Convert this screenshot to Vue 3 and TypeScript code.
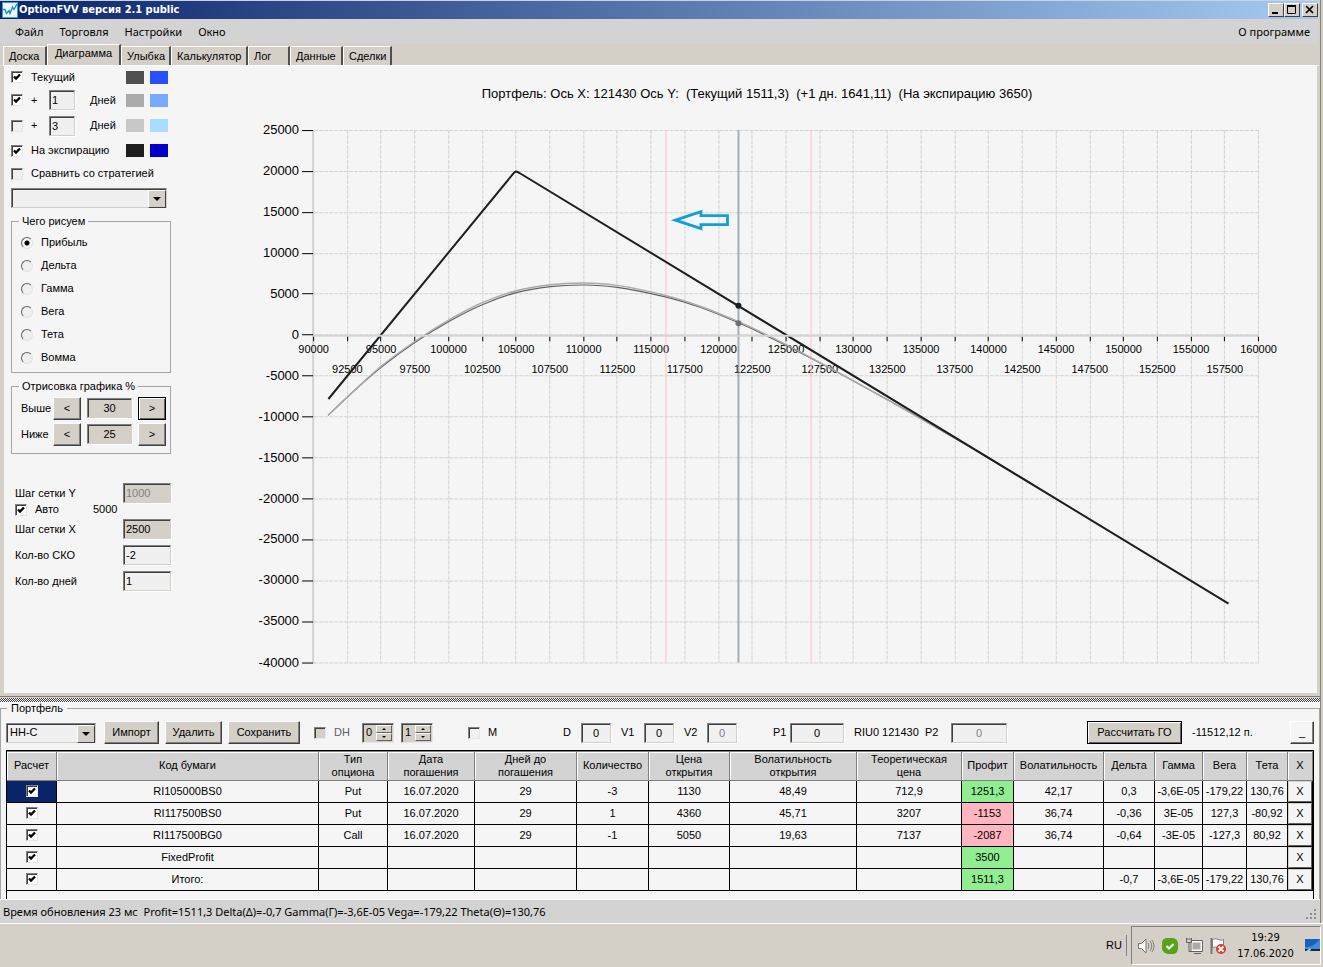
<script setup lang="ts">
import { ref } from 'vue'

type Pt = [number, number]

const menu = ['Файл', 'Торговля', 'Настройки', 'Окно']
const tabs = [
  { t: 'Доска', w: 44 }, { t: 'Диаграмма', w: 74 }, { t: 'Улыбка', w: 50 }, { t: 'Калькулятор', w: 77 },
  { t: 'Лог', w: 42 }, { t: 'Данные', w: 53 }, { t: 'Сделки', w: 49 },
]
const series = [
  { id: 'now', on: true, label: 'Текущий', a: '#505050', b: '#2850ff', h: 22 },
  { id: 'd1', on: true, label: '+', days: '1', a: '#aaaaaa', b: '#78aaff', h: 24 },
  { id: 'd3', on: false, label: '+', days: '3', a: '#c8c8c8', b: '#aadcff', h: 27 },
  { id: 'exp', on: true, label: 'На экспирацию', a: '#1e1e1e', b: '#0000c8', h: 23 },
]
const greeks = ['Прибыль', 'Дельта', 'Гамма', 'Вега', 'Тета', 'Вомма']
const greek = ref('Прибыль')

// chart scales
const X = (v: number) => 313.5 + (v - 90000) * 0.013487
const Y = (v: number) => 334.9 - v * 0.008182
const yTicks = Array.from({ length: 14 }, (_, i) => 25000 - i * 5000)
const xTicks = Array.from({ length: 29 }, (_, i) => 90000 + i * 2500)
const snap = (v: number) => Math.floor(v) + 0.5

const expiry = [[91100, -7800], [104850, 19850], [105000, 20000], [105250, 19800], [157780, -32780]] as Pt[]
const expiryPts = expiry.map(([x, y]) => `${X(x).toFixed(1)},${Y(y).toFixed(1)}`).join(' ')

const nowPts: Pt[] = [[328, 415], [354, 390.5], [381, 367], [415, 342], [450, 320.5], [482, 304.5], [516, 292.5], [550, 286.5], [583, 284.8], [617, 287.2], [666, 297], [701, 307.5], [738, 322.5], [769, 337], [820, 363], [887, 399.5], [930, 424], [970, 447], [1030, 483]]
const lift = [0, 0, -1, -1, -1.5, -2, -2, -2, -2, -2, -1.5, -1, -1, -1, -0.5, 0, 0, 0, 0]
const plusPts: Pt[] = nowPts.map(([x, y], i) => [x, y + lift[i]])

function smooth(p: Pt[]): string {
  let d = `M${p[0][0]} ${p[0][1]}`
  for (let i = 0; i < p.length - 1; i++) {
    const a = p[Math.max(0, i - 1)], b = p[i], c = p[i + 1], e = p[Math.min(p.length - 1, i + 2)]
    d += ` C${b[0] + (c[0] - a[0]) / 6} ${b[1] + (c[1] - a[1]) / 6} ${c[0] - (e[0] - b[0]) / 6} ${c[1] - (e[1] - b[1]) / 6} ${c[0]} ${c[1]}`
  }
  return d
}

const heads = ['Расчет', 'Код бумаги', 'Тип\nопциона', 'Дата\nпогашения', 'Дней до\nпогашения', 'Количество', 'Цена\nоткрытия', 'Волатильность\nоткрытия', 'Теоретическая\nцена', 'Профит', 'Волатильность', 'Дельта', 'Гамма', 'Вега', 'Тета', 'X']
const rows = [
  ['RI105000BS0', 'Put', '16.07.2020', '29', '-3', '1130', '48,49', '712,9', '1251,3', '42,17', '0,3', '-3,6E-05', '-179,22', '130,76'],
  ['RI117500BS0', 'Put', '16.07.2020', '29', '1', '4360', '45,71', '3207', '-1153', '36,74', '-0,36', '3E-05', '127,3', '-80,92'],
  ['RI117500BG0', 'Call', '16.07.2020', '29', '-1', '5050', '19,63', '7137', '-2087', '36,74', '-0,64', '-3E-05', '-127,3', '80,92'],
  ['FixedProfit', '', '', '', '', '', '', '', '3500', '', '', '', '', ''],
  ['Итого:', '', '', '', '', '', '', '', '1511,3', '', '-0,7', '-3,6E-05', '-179,22', '130,76'],
]
const profitClass = (c: string, i: number) => (i !== 8 ? '' : c.startsWith('-') ? 'loss' : 'gain')
</script>

<template>
  <div class="desktop">
    <div class="window">
      <header class="title">
        <svg class="logo" viewBox="0 0 16 16" aria-hidden="true">
          <rect width="16" height="16" fill="#2d9fd0" />
          <rect x="1" y="1" width="14" height="14" fill="#eefaff" />
          <path d="M1 7.500h2l1.500 4L7 8.500l1 3L10.500 5l1.500 2.500L15 2" fill="none" stroke="#1689bd" stroke-width="1.300" />
        </svg>
        <h1>OptionFVV версия 2.1 public</h1>
        <div class="winbtns">
          <button aria-label="Свернуть"><svg viewBox="0 0 12 10"><path d="M2 8h6" stroke="#000" stroke-width="2" /></svg></button>
          <button aria-label="Развернуть"><svg viewBox="0 0 12 10"><path d="M1.500 1v7.500h8V1" fill="none" stroke="#000" /><path d="M1 1h9" stroke="#000" stroke-width="2" /></svg></button>
          <button class="close" aria-label="Закрыть"><svg viewBox="0 0 12 10"><path d="M2 1l7 7M9 1L2 8" stroke="#000" stroke-width="1.700" /></svg></button>
        </div>
      </header>

      <nav class="menu">
        <button v-for="m in menu" :key="m">{{ m }}</button>
        <button class="about">О программе</button>
      </nav>

      <div class="tabs" role="tablist">
        <button v-for="(t, i) in tabs" :key="t.t" role="tab" :class="{ on: i === 1 }" :aria-selected="i === 1" :style="{ width: t.w + 'px' }">{{ t.t }}</button>
      </div>

      <main class="page">
        <aside class="side">
          <div v-for="s in series" :key="s.id" class="srow" :style="{ height: s.h + 'px' }">
            <input :id="s.id" type="checkbox" class="chk" :checked="s.on" />
            <label :for="s.id" :class="s.days ? 'plus' : 'wide'">{{ s.label }}</label>
            <template v-if="s.days">
              <input :id="s.id + 'n'" class="box days" :value="s.days" />
              <label :for="s.id + 'n'" class="dn">Дней</label>
            </template>
            <i class="sw" :style="{ background: s.a }"></i><i class="sw" :style="{ background: s.b }"></i>
          </div>
          <div class="srow cmp">
            <input id="cmp" type="checkbox" class="chk" /><label for="cmp">Сравнить со стратегией</label>
          </div>
          <div class="combo strat"><select aria-label="Стратегия"><option></option></select></div>

          <fieldset class="group">
            <legend>Чего рисуем</legend>
            <label v-for="g in greeks" :key="g" class="radio"><input v-model="greek" type="radio" name="greek" :value="g" />{{ g }}</label>
          </fieldset>

          <fieldset class="group range">
            <legend>Отрисовка графика %</legend>
            <div class="rrow"><label for="up">Выше</label><button class="btn">&lt;</button><input id="up" class="box" value="30" /><button class="btn default">&gt;</button></div>
            <div class="rrow"><label for="dn">Ниже</label><button class="btn">&lt;</button><input id="dn" class="box" value="25" /><button class="btn">&gt;</button></div>
          </fieldset>

          <div class="params">
            <div class="prow first"><label for="gy">Шаг сетки Y</label><input id="gy" class="box gray" value="1000" disabled /></div>
            <div class="prow auto"><input id="auto" type="checkbox" class="chk" checked /><label for="auto">Авто</label><span>5000</span></div>
            <div class="prow"><label for="gx">Шаг сетки X</label><input id="gx" class="box gray" value="2500" /></div>
            <div class="prow"><label for="sko">Кол-во СКО</label><input id="sko" class="box" value="-2" /></div>
            <div class="prow"><label for="days">Кол-во дней</label><input id="days" class="box" value="1" /></div>
          </div>
        </aside>

        <svg class="chart" viewBox="204 66 1112 626" role="img" aria-label="Портфель">
          <text class="ctitle" x="756.500" y="98" text-anchor="middle" xml:space="preserve">Портфель: Ось X: 121430 Ось Y:&nbsp; (Текущий 1511,3)&nbsp; (+1 дн. 1641,11)&nbsp; (На экспирацию 3650)</text>
          <g stroke="#d3d3d3" stroke-dasharray="4 1">
            <line v-for="v in yTicks" :key="'h' + v" x1="314" x2="1258" :y1="snap(Y(v))" :y2="snap(Y(v))" />
            <line v-for="v in xTicks" :key="'v' + v" y1="130" y2="662" :x1="snap(X(v))" :x2="snap(X(v))" />
          </g>
          <path d="M313 130V663" stroke="#d3d3d3" stroke-width="2" />
          <g stroke="#000">
            <line v-for="v in yTicks" :key="'t' + v" x1="302" x2="313" :y1="snap(Y(v))" :y2="snap(Y(v))" />
            <line v-for="v in xTicks" :key="'u' + v" y1="336" y2="341" :x1="snap(X(v))" :x2="snap(X(v))" />
          </g>
          <g class="ylab"><text v-for="v in yTicks" :key="v" x="299" :y="Math.round(Y(v)) + 4" text-anchor="end">{{ v }}</text></g>
          <g class="xlab"><text v-for="(v, i) in xTicks" :key="v" :x="X(v)" :y="i % 2 ? 373 : 353" text-anchor="middle">{{ v }}</text></g>
          <path d="M665.500 130V662M810.500 130V662" stroke="#ffc0cb" />
          <path d="M738 130V662" stroke="#708090" stroke-opacity=".6" stroke-width="2" />
          <path :d="smooth(nowPts)" fill="none" stroke="#606060" stroke-width="1.200" />
          <path :d="smooth(plusPts)" fill="none" stroke="#aaaaaa" stroke-width="1.400" />
          <polyline :points="expiryPts" fill="none" stroke="#1e1e1e" stroke-width="2" stroke-linejoin="round" />
          <path d="M313 335.500H1258" stroke="#d3d3d3" stroke-width="2" fill="none" />
          <circle cx="738" cy="305.500" r="3" fill="#1e1e1e" />
          <circle cx="738" cy="323" r="3" fill="#707070" />
          <path d="M675 220L700.500 211.500V215.500H727V224.500H700.500V228.500Z" fill="none" stroke="#119fda" stroke-width="2.800" />
        </svg>
      </main>

      <div class="splitter"></div>

      <section class="lower">
        <fieldset class="portfolio">
          <legend>Портфель</legend>
          <div class="tools">
            <div class="combo white"><select aria-label="Портфель"><option>HH-C</option></select></div>
            <button class="btn w55">Импорт</button>
            <button class="btn w57">Удалить</button>
            <button class="btn w72">Сохранить</button>
            <span class="pair off"><input id="dh" type="checkbox" class="chk" disabled /><label for="dh">DH</label></span>
            <span class="spin"><input value="0" aria-label="DH от" /><span><button aria-label="Больше"><i class="up"></i></button><button aria-label="Меньше"><i class="down"></i></button></span></span>
            <span class="spin"><input value="1" aria-label="DH шаг" /><span><button aria-label="Больше"><i class="up"></i></button><button aria-label="Меньше"><i class="down"></i></button></span></span>
            <span class="pair"><input id="m" type="checkbox" class="chk" /><label for="m">M</label></span>
            <label for="d">D</label><input id="d" class="box w30" value="0" />
            <label for="v1">V1</label><input id="v1" class="box w30" value="0" />
            <label for="v2">V2</label><input id="v2" class="box w30" value="0" disabled />
            <label for="p1">P1</label><input id="p1" class="box w54" value="0" />
            <span>RIU0 121430</span>
            <label for="p2">P2</label><input id="p2" class="box w56" value="0" disabled />
            <button class="btn default w95">Рассчитать ГО</button>
            <span>-11512,12 п.</span>
            <button class="btn mini">_</button>
          </div>

          <div class="gridwrap">
            <table>
              <colgroup><col v-for="i in 16" :key="i" :class="'c' + i" /></colgroup>
              <thead><tr><th v-for="h in heads" :key="h">{{ h }}</th></tr></thead>
              <tbody>
                <tr v-for="(r, n) in rows" :key="n">
                  <td :class="{ sel: n === 0 }"><input type="checkbox" class="chk" checked :aria-label="r[0]" /></td>
                  <td v-for="(c, i) in r" :key="i" :class="profitClass(c, i)">{{ c }}</td>
                  <td class="xcell"><button class="btn">X</button></td>
                </tr>
              </tbody>
            </table>
          </div>
        </fieldset>
      </section>

      <footer class="status">
        <span>Время обновления 23 мс&nbsp; Profit=1511,3 Delta(Δ)=-0,7 Gamma(Γ)=-3,6E-05 Vega=-179,22 Theta(Θ)=130,76</span>
        <svg viewBox="0 0 12 12" class="grip" aria-hidden="true"><path d="M9 1h2v2H9zM5 5h2v2H5zM9 5h2v2H9zM1 9h2v2H1zM5 9h2v2H5zM9 9h2v2H9z" fill="#8f8d88" /></svg>
      </footer>
    </div>

    <div class="taskbar">
      <span class="lang">RU</span>
      <div class="tray">
        <svg viewBox="0 0 18 18"><path d="M1.500 6.500h3L9 2v14l-4.500-4.500h-3z" fill="#fff" stroke="#77746f" /><path d="M11 6q2 3 0 6M13 4q3.500 5 0 10M15 3q4 6 0 12" fill="none" stroke="#85827c" /></svg>
        <svg viewBox="0 0 18 18"><path d="M5 1h7q5 1 5 6v5q-1 5-5 5H7q-5-1-6-5V6q0-4 4-5z" fill="#55a316" /><path d="M5.500 9l2.500 2.500L12.500 7" fill="none" stroke="#fff" stroke-width="2" /></svg>
        <svg viewBox="0 0 18 18"><path d="M6.500 4.500h10v9h-10z" fill="#aaa9a5" stroke="#fff" stroke-width="2" /><path d="M6 3.500h11.500v11H6zM9 16.500h7M1.500 1v4.500h5V1M4 5.500v9h3M3 1v2M5 1v2" fill="none" stroke="#66635e" /></svg>
        <svg viewBox="0 0 18 18"><path d="M2.500 1v16" stroke="#77746f" stroke-width="2" /><path d="M3.500 2.500q3-1.500 6 0t5 0v8q-3 1-5.500 0t-5.500 0z" fill="#fff" stroke="#85827c" /><circle cx="12" cy="12" r="5" fill="#d83b35" /><path d="M9.500 9.500l5 5M14.500 9.500l-5 5" stroke="#fff" stroke-width="1.800" /></svg>
        <div class="clock"><div>19:29</div><div>17.06.2020</div></div>
        <svg class="desk" viewBox="0 0 16 18"><path d="M1 2h15v12H1z" fill="#1c5fb8" /><path d="M1 10q8 1 15-8v12H1z" fill="#3c8de0" /><path d="M1 12h15v2H1z" fill="#20262e" /><path d="M2 14l4-3 1 2-3 2z" fill="#9fd2f2" /></svg>
      </div>
    </div>
  </div>
</template>

<style>
body { background: #d4d0c8; }
</style>

<style scoped>
.desktop { min-height: 100vh; display: flex; flex-direction: column; background: #d4d0c8; font: 11px/13px "Liberation Sans", Arial, sans-serif; color: #000; }
.desktop * { box-sizing: border-box; }
button, input, select { font: inherit; color: inherit; margin: 0; border-radius: 0; }
.window { margin-right: 2px; border-right: 1px solid #808080; }
.title { display: flex; align-items: center; height: 19px; margin-right: 2px; padding-left: 2px; border-top: 1px solid #c5d4e4; background: linear-gradient(90deg, #0a246a, #a6caf0); }
.logo { width: 16px; height: 16px; }
h1 { flex: 1; margin: 0 0 0 1px; font: bold 11px/14px "DejaVu Sans Condensed", Tahoma, sans-serif; color: #fff; }
.winbtns { display: flex; }
.winbtns button { width: 16px; height: 14px; padding: 0; border: 1px solid; border-color: #fff #404040 #404040 #fff; background: #d4d0c8; display: flex; align-items: center; justify-content: center; }
.winbtns svg { width: 12px; height: 10px; flex: none; }
.winbtns .close { margin-left: 2px; }
.menu { display: flex; height: 25px; padding: 0 4px 0 7px; background: #d3d3d3; align-items: center; margin-right: 2px; font-family: "Noto Sans", Tahoma, sans-serif; }
.menu button { border: 0; background: none; padding: 0 8px; height: 22px; }
.menu .about { margin-left: auto; padding: 0 4px; }
.tabs { display: flex; height: 21px; align-items: flex-end; padding-left: 3px; }
.tabs button { height: 19px; padding: 0 0 0 5px; text-align: left; border: 1px solid #fff; border-bottom: 0; border-right: 2px solid #505050; background: #d4d0c8; white-space: nowrap; }
.tabs .on { height: 21px; text-align: center; padding: 0 0 3px; }
.page { display: flex; border: solid #d4d0c8; border-width: 0 3px 3px 4px; border-top: 1px solid #fff; background: #f5f5f5; box-shadow: 0 1px #808080; }
.side { width: 200px; flex: none; padding-left: 7px; }
.chart { flex: 1; min-width: 0; display: block; }
.ctitle { font-size: 13px; }
.ylab { font-size: 13px; }
.xlab { font-size: 11px; }
.srow { display: flex; align-items: center; }
.srow label { margin-left: 8px; white-space: nowrap; }
.plus { width: 10px; }
.srow .dn { margin-left: 15px; width: 36px; }
.srow .wide { width: 95px; }
.days.box { width: 26px; margin-left: 8px; }
.sw { width: 18px; height: 13px; margin-right: 6px; }
.cmp { height: 23px; }
.chk { appearance: none; flex: none; width: 12px; height: 12px; border: 1px solid; border-color: #808080 #e6e6e6 #e6e6e6 #808080; background: #f0f0f0; box-shadow: inset 1px 1px #404040; }
.chk:checked { background: #fff url("data:image/svg+xml,%3Csvg xmlns='http://www.w3.org/2000/svg' viewBox='0 0 10 10'%3E%3Cpath d='M2 4.500l2 2 4-4' fill='none' stroke='%23000' stroke-width='2.300'/%3E%3C/svg%3E") center / 10px 10px; }
.chk:disabled { background: #d4d0c8; }
.box { width: 48px; height: 20px; padding: 0 0 0 2px; border: 1px solid; border-color: #808080 #d4d0c8 #d4d0c8 #808080; box-shadow: inset 1px 1px #404040, 1px 1px #fff; background: #f0f0f0; }
.gray, .range .box { background: #d4d0c8; }
.box:disabled { color: #808080; }
.combo { position: relative; height: 20px; border: 1px solid; border-color: #808080 #d4d0c8 #d4d0c8 #808080; box-shadow: inset 1px 1px #404040; background: #f0f0f0; }
.combo select { appearance: none; width: 100%; height: 18px; padding: 0 18px 0 3px; border: 0; background: none; }
.combo::after { content: ""; position: absolute; right: 0; top: 1px; width: 16px; height: 16px; pointer-events: none; border: 1px solid; border-color: #fff #404040 #404040 #fff; background: url("data:image/svg+xml,%3Csvg xmlns='http://www.w3.org/2000/svg' viewBox='0 0 14 14'%3E%3Cpath d='M3 5h8L7 9z'/%3E%3C/svg%3E") center / 14px 14px #d4d0c8; }
.strat { width: 156px; margin-top: 3px; }
.white { width: 90px; }
.group { width: 160px; min-width: 0; margin: 7px 0 0; padding: 3px 0 3px 9px; border: 1px solid #a5a5a5; }
.group legend { margin-left: -2px; padding: 0 3px; }
.radio { display: flex; align-items: center; height: 23px; }
.radio input { appearance: none; width: 12px; height: 12px; margin-right: 8px; border: 1px solid; border-color: #606060 #e3e3e3 #e3e3e3 #606060; border-radius: 50%; background: #f0f0f0; }
.radio input:checked { background: radial-gradient(circle, #000 2px, #f5f5f5 3px); }
.range { padding: 2px 0 6px 9px; }
.rrow { display: flex; align-items: center; height: 26px; }
.rrow label { width: 32px; }
.rrow .btn { width: 28px; }
.rrow .box { width: 45px; height: 20px; margin: 0 6px; padding: 0; text-align: center; }
.btn { height: 23px; padding: 0; border: 1px solid; border-color: #fff #404040 #404040 #fff; box-shadow: inset -1px -1px #808080; background: #d4d0c8; white-space: nowrap; }
.btn.default { border-color: #000; box-shadow: inset 1px 1px #fff, inset -1px -1px #606060; }
.params { margin-top: 29px; padding: 0 0 4px 4px; }
.prow { display: flex; align-items: center; height: 26px; }
.prow label { width: 108px; }
.prow.first { height: 20px; }
.auto.prow { height: 13px; }
.auto label { width: 58px; margin-left: 8px; }
.splitter { height: 4px; margin-top: 2px; background: repeating-conic-gradient(#404040 0 25%, #f5f5f5 0 50%) 0 0 / 2px 2px; }
.lower { background: #f5f5f5; }
.portfolio { min-width: 0; margin: 0; padding: 3px 5px 0; border: 1px solid #a5a5a5; border-bottom: 0; }
.portfolio legend { margin-left: 1px; padding: 0 4px; }
.tools { display: grid; align-items: center; justify-items: start; height: 30px; grid-template-columns: 98px 61px 63px 86px 48px 39px 67px 95px 18px 40px 23px 40px 23px 66px 17px 64px 71px 26px minmax(56px, 1fr) 105px 98px 24px; white-space: nowrap; }
.tools .box { padding: 0; text-align: center; }
.w30.box { width: 30px; }
.w54.box { width: 54px; }
.w56.box { width: 56px; }
.w55 { width: 55px; }
.w57 { width: 57px; }
.w72 { width: 72px; }
.w95 { width: 95px; }
.mini { width: 24px; background: #f5f5f5; }
.pair { display: flex; align-items: center; gap: 8px; }
.off { color: #606060; }
.spin { display: flex; width: 32px; height: 20px; border: 1px solid; border-color: #808080 #e6e6e6 #e6e6e6 #808080; box-shadow: inset 1px 1px #404040; background: #d4d0c8; padding: 1px; }
.spin input { width: 12px; border: 0; padding: 0 0 0 2px; background: none; }
.spin > span { flex: 1; display: flex; flex-direction: column; }
.spin button { flex: 1; min-height: 0; padding: 0; border: 1px solid; border-color: #fff #606060 #606060 #fff; background: #d4d0c8; display: flex; align-items: center; justify-content: center; }
.up, .down { border: solid transparent; border-width: 0 2px 2px; border-bottom-color: #000; }
.down { border-width: 2px 2px 0; border-top-color: #000; }
.gridwrap { border: 1px solid #000; border-bottom: 0; padding-bottom: 8px; margin-top: 2px; }
table { width: 100%; table-layout: fixed; border-collapse: separate; border-spacing: 0; text-align: center; }
th { height: 30px; padding: 0; font-weight: normal; white-space: pre; background: #d3d3d3; border: solid #808080; border-width: 1px 1px 1px 0; box-shadow: inset 1px 1px #fff; }
td { height: 22px; padding: 0; border: solid #000; border-width: 0 1px 1px 0; white-space: nowrap; }
td .chk { display: block; margin: 0 auto; }
.sel { background: #0a246a; }
.gain { background: #90ee90; }
.loss { background: #ffb6c1; }
.xcell .btn { display: block; width: 100%; height: 21px; background: #f5f5f5; border-color: #d4d0c8 #606060 #606060 #d4d0c8; box-shadow: none; }
.c1 { width: 50px; } .c3 { width: 69px; } .c4 { width: 87px; } .c5 { width: 102px; } .c6 { width: 72px; }
.c7 { width: 81px; } .c8 { width: 127px; } .c9 { width: 105px; } .c10 { width: 52px; } .c11 { width: 90px; }
.c12 { width: 51px; } .c13 { width: 48px; } .c14 { width: 44px; } .c15 { width: 41px; } .c16 { width: 25px; }
.status { display: flex; align-items: center; justify-content: space-between; height: 24px; padding: 0 3px; border-top: 1px solid #fff; background: #d3d3d3; font-family: "Noto Sans", Tahoma, sans-serif; white-space: nowrap; }
.grip { width: 12px; height: 12px; margin-top: 6px; }
.taskbar { flex: 1; min-height: 43px; display: flex; justify-content: flex-end; align-items: stretch; padding: 2px 2px 2px 0; border-top: 1px solid #fff; font-family: "DejaVu Sans Condensed", Tahoma, sans-serif; }
.lang { align-self: center; padding: 4px 4px 4px 0; border-right: 1px solid #808080; margin-right: 4px; font-family: "Liberation Sans", Arial, sans-serif; }
.tray { display: flex; align-items: center; gap: 6px; width: 190px; padding: 2px 0 0 5px; border: 1px solid; border-color: #808080 #fff #fff #808080; }
.tray svg { width: 18px; height: 18px; flex: none; }
.clock { flex: 1; text-align: center; line-height: 16px; }
.tray .desk { width: 16px; }
</style>
